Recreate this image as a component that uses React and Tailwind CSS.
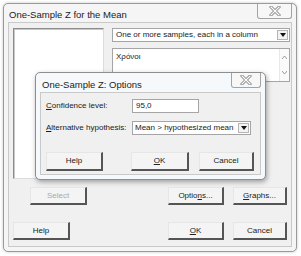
import React from 'react';

const CloseX = () => (
  <svg width="12" height="10" viewBox="0 0 12 10">
    <path d="M2 1 L10 9 M10 1 L2 9" stroke="#8a8a8a" strokeWidth="3" strokeLinecap="square" />
    <path d="M2 1 L10 9 M10 1 L2 9" stroke="#ffffff" strokeWidth="1.2" strokeLinecap="square" />
  </svg>
);

const Arrow = () => (
  <div className="w-[11px] h-[10px] mr-[1px] border border-[#b5b5b5] bg-[#f3f3f3] flex items-center justify-center">
    <svg width="6" height="4" viewBox="0 0 6 4"><path d="M0 0 H6 L3 4 Z" fill="#111" /></svg>
  </div>
);

const Btn = ({ w, h = 18, className = '', disabled, children }) => (
  <div
    className={`flex items-center justify-center bg-[#f4f4f4] border-t border-l border-[#e6e6e6] border-r-2 border-b-2 border-r-[#555] border-b-[#555] text-[8px] ${disabled ? 'text-[#a8a8a8]' : 'text-[#222]'} ${className}`}
    style={{ width: w, height: h }}
  >
    {children}
  </div>
);

export default function App() {
  return (
    <div className="relative w-[301px] h-[256px] bg-white p-[3px] overflow-hidden font-['Liberation_Sans',Arial,sans-serif] text-[#1a1a1a]">
      {/* main dialog */}
      <div className="w-[294px] h-[249px] border border-[#9a9a9a] rounded-[5px] bg-[#f5f5f5] flex flex-col shadow-[0_0_3px_rgba(0,0,0,0.25)]">
        <div className="flex justify-between h-[18px] shrink-0">
          <div className="pl-[5px] pt-[6px] text-[9.5px] leading-none text-[#222]">One-Sample Z for the Mean</div>
          <div className="w-[35px] h-[15px] mr-[4px] border border-t-0 border-[#a3a3a3] rounded-b-[3px] bg-[#f7f7f7] flex items-center justify-center">
            <CloseX />
          </div>
        </div>
        <div className="mx-[4px] mb-[4px] flex-1 border border-[#c9c9c9] bg-[#f0f0f0] flex flex-col">
          <div className="flex pl-[4px] pt-[5px]">
            <div className="w-[91px] h-[151px] bg-white border border-[#8c8c8c] border-r-[#dcdcdc] border-b-[#dcdcdc] shadow-[inset_1px_1px_0_#c8c8c8]" />
            <div className="ml-[8px] w-[178px] flex flex-col">
              <div className="h-[14px] bg-white border border-[#a5a5a5] flex items-center justify-between">
                <span className="pl-[3px] text-[8px] leading-none">One or more samples, each in a column</span>
                <Arrow />
              </div>
              <div className="mt-[6px] h-[34px] bg-white border border-[#a5a5a5] flex justify-between">
                <span className="pl-[3px] pt-[4px] text-[8px] leading-none">Χρόνοι</span>
                <div className="w-[10px] flex flex-col items-center justify-between py-[7px] bg-[#fafafa] border-l border-[#e8e8e8]">
                  <svg width="5" height="3" viewBox="0 0 5 3"><path d="M0 3 L2.5 0 L5 3" fill="none" stroke="#9a9a9a" /></svg>
                  <svg width="5" height="3" viewBox="0 0 5 3"><path d="M0 0 L2.5 3 L5 0" fill="none" stroke="#9a9a9a" /></svg>
                </div>
              </div>
            </div>
          </div>
          <div className="flex mt-[8px]">
            <Btn w={57} className="ml-[21px]" disabled>Select</Btn>
            <Btn w={56} className="ml-[81px]">Optio<span className="underline">n</span>s...</Btn>
            <Btn w={54} className="ml-[9px]"><span className="underline">G</span>raphs...</Btn>
          </div>
          <div className="flex mt-[17px]">
            <Btn w={57} className="ml-[4px]">Help</Btn>
            <Btn w={56} className="ml-[98px]"><span className="underline">O</span>K</Btn>
            <Btn w={54} className="ml-[9px]">Cancel</Btn>
          </div>
        </div>
      </div>

      {/* options sub-dialog */}
      <div className="absolute left-[35px] top-[72px] w-[231px] h-[108px] border border-[#8e8e8e] rounded-[5px] bg-[#f6f9fb] flex flex-col shadow-[1px_2px_5px_rgba(0,0,0,0.35)]">
        <div className="flex justify-between h-[19px] shrink-0">
          <div className="pl-[6px] pt-[7px] text-[9.5px] leading-none text-[#222]">One-Sample Z: Options</div>
          <div className="w-[30px] h-[15px] mr-[4px] border border-t-0 border-[#a3a3a3] rounded-b-[3px] bg-[#f7f7f7] flex items-center justify-center">
            <CloseX />
          </div>
        </div>
        <div className="mx-[4px] mb-[4px] flex-1 border border-[#c9c9c9] bg-[#f0f0f0] flex flex-col pl-[5px]">
          <div className="flex items-center mt-[6px]">
            <span className="w-[86px] text-[8px] leading-none"><span className="underline">C</span>onfidence level:</span>
            <div className="w-[67px] h-[14px] bg-white border border-[#a5a5a5] flex items-center pl-[3px] text-[8px] leading-none">95,0</div>
          </div>
          <div className="flex items-center mt-[8px]">
            <span className="w-[86px] text-[8px] leading-none whitespace-nowrap"><span className="underline">A</span>lternative hypothesis:</span>
            <div className="w-[119px] h-[14px] bg-white border border-[#a5a5a5] flex items-center justify-between">
              <span className="pl-[2px] text-[8px] leading-none whitespace-nowrap">Mean &gt; hypothesized mean</span>
              <Arrow />
            </div>
          </div>
          <div className="flex mt-[17px]">
            <Btn w={57} h={19}>Help</Btn>
            <Btn w={58} h={19} className="ml-[28px]"><span className="underline">O</span>K</Btn>
            <Btn w={55} h={19} className="ml-[10px]">Cancel</Btn>
          </div>
        </div>
      </div>
    </div>
  );
}
